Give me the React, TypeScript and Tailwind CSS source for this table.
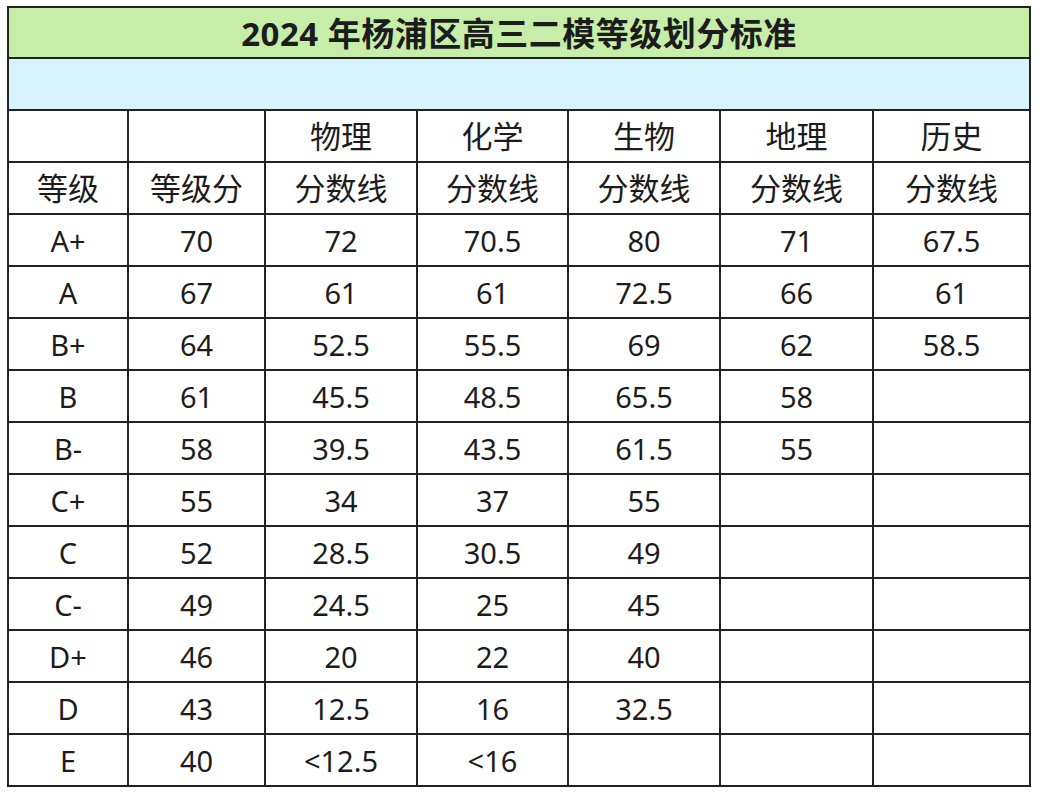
const subjects = ["物理", "化学", "生物", "地理", "历史"];

const rows: string[][] = [
  ["A+", "70", "72", "70.5", "80", "71", "67.5"],
  ["A", "67", "61", "61", "72.5", "66", "61"],
  ["B+", "64", "52.5", "55.5", "69", "62", "58.5"],
  ["B", "61", "45.5", "48.5", "65.5", "58", ""],
  ["B-", "58", "39.5", "43.5", "61.5", "55", ""],
  ["C+", "55", "34", "37", "55", "", ""],
  ["C", "52", "28.5", "30.5", "49", "", ""],
  ["C-", "49", "24.5", "25", "45", "", ""],
  ["D+", "46", "20", "22", "40", "", ""],
  ["D", "43", "12.5", "16", "32.5", "", ""],
  ["E", "40", "<12.5", "<16", "", "", ""],
];

const widths = [120, 137, 152, 151, 152, 153, 157];

const cell = "border-2 border-[#222222] p-0 text-center align-middle";

export default function App() {
  return (
    <div className="min-h-[800px] w-[1040px] bg-white pl-[7px] pt-[6px] text-[#1c1c1c] [font-family:'Noto_Sans','Noto_Sans_CJK_SC',sans-serif]">
      <table className="w-[1024px] table-fixed border-collapse border-2 border-[#222222]">
        <colgroup>
          {widths.map((w, i) => (
            <col key={i} style={{ width: w }} />
          ))}
        </colgroup>
        <tbody>
          <tr className="h-[51px] bg-[#c6eea9]">
            <td colSpan={7} className={`${cell} pt-[2px] text-[33px] font-bold leading-none tracking-[0.5px]`}>
              2024 年杨浦区高三二模等级划分标准
            </td>
          </tr>
          <tr className="h-[52px] bg-[#d7f3fb]">
            <td colSpan={7} className={cell}></td>
          </tr>
          <tr className="h-[52px] text-[31px] leading-none">
            <td className={cell}></td>
            <td className={cell}></td>
            {subjects.map((s) => (
              <td key={s} className={cell}>
                {s}
              </td>
            ))}
          </tr>
          <tr className="h-[52px] text-[31px] leading-none">
            <td className={cell}>等级</td>
            <td className={cell}>等级分</td>
            {subjects.map((s) => (
              <td key={s} className={cell}>
                分数线
              </td>
            ))}
          </tr>
          {rows.map((r) => (
            <tr key={r[0]} className="h-[52px] text-[29px] leading-none">
              {r.map((v, i) => (
                <td key={i} className={cell}>
                  {v}
                </td>
              ))}
            </tr>
          ))}
        </tbody>
      </table>
    </div>
  );
}
